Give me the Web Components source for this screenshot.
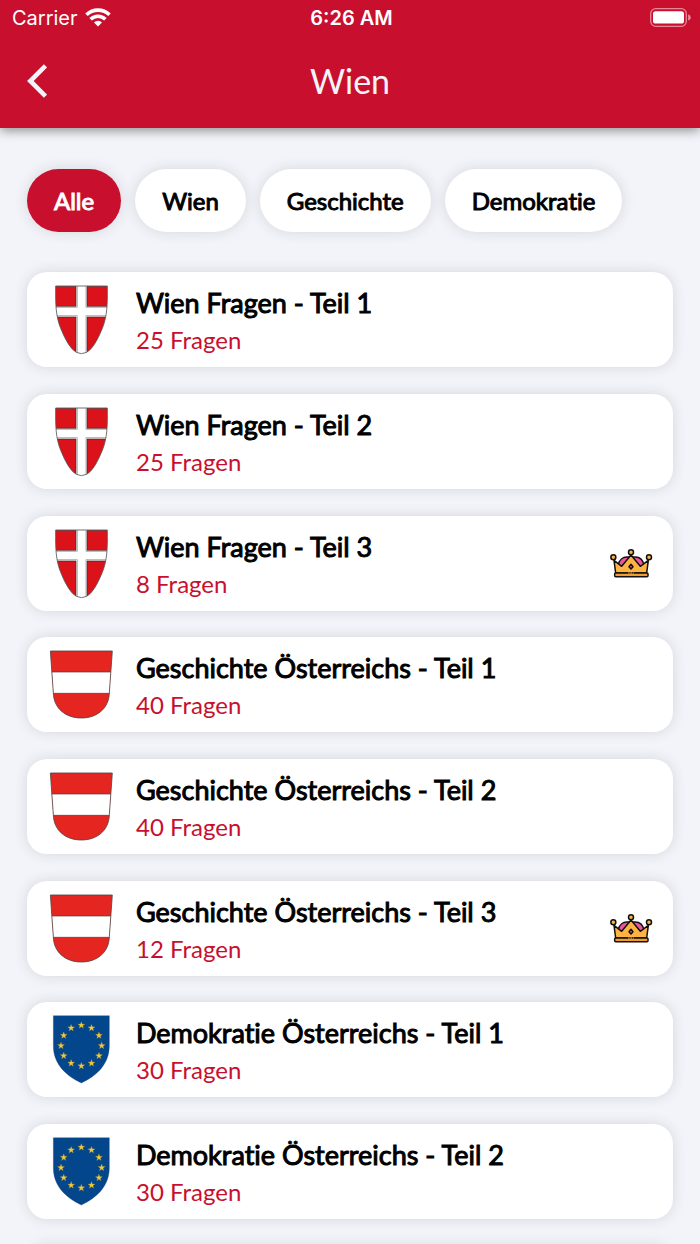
<!DOCTYPE html>
<html lang="de">
<head>
<meta charset="utf-8">
<meta name="viewport" content="width=device-width, initial-scale=1">
<title>Wien</title>
<style>
  body {
    margin: 0;
    font-family: Lato, sans-serif;
    font-variant-ligatures: none;
    color: #000;
    background: #f3f4f9;
    --red: #c8102e;
    --shadow: 0 0 14px rgba(40, 45, 60, 0.14);
  }
</style>
</head>
<body>
<quiz-app></quiz-app>

<script>
const define = (name, html, setup) => {
  const template = document.createElement('template');
  template.innerHTML = html;

  customElements.define(name, class extends HTMLElement {
    constructor() {
      super();
      this.attachShadow({ mode: 'open' }).appendChild(template.content.cloneNode(true));
    }

    connectedCallback() {
      if (setup) setup(this, this.shadowRoot);
    }
  });
};

define('status-bar', `
  <style>
  :host {
    display: grid;
    grid-template-columns: 1fr auto 1fr;
    align-items: center;
    height: 36px;
    padding: 0 9px 0 12px;
    font: 20px/24px Inter, sans-serif;
    color: #fff;
  }

  .network {
    display: flex;
    align-items: center;
    gap: 7px;
  }

  .time {
    font-weight: 600;
  }

  .battery {
    justify-self: end;
  }

  svg {
    display: block;
  }
  </style>

  <div class="network">
    <span>Carrier</span>
    <svg width="26" height="20" viewBox="0 0 26 20" fill="none" stroke="#fff" stroke-width="3.6" aria-hidden="true">
      <path d="M1.500 6.800a16.500 16.500 0 0 1 23 0M5.600 11.300a10.500 10.500 0 0 1 14.800 0" />
      <path d="M13 18.500l-4-4a5.600 5.600 0 0 1 8 0z" fill="#fff" stroke="none" />
    </svg>
  </div>
  <time class="time">6:26 AM</time>
  <svg class="battery" width="41" height="20" viewBox="0 0 41 20" aria-hidden="true">
    <rect x="0.7" y="0.700" width="35.6" height="17.6" rx="5" fill="none" stroke="#fff" stroke-opacity="0.5" stroke-width="1.3" />
    <rect x="3" y="3.200" width="31" height="12.4" rx="2.6" fill="#fff" />
    <path d="M38.2 6.2q2.5 1 2.5 3.2t-2.5 3.2z" fill="#fff" fill-opacity="0.55" />
  </svg>
`);

define('app-header', `
  <style>
  :host {
    display: block;
    position: relative;
    z-index: 1;
    background: var(--red);
    box-shadow: 0 3px 10px rgba(0, 0, 0, 0.4);
  }

  .toolbar {
    display: grid;
    grid-template-columns: 1fr auto 1fr;
    align-items: center;
    box-sizing: border-box;
    height: 92px;
    padding: 0 15px 2px;
  }

  button {
    width: 44px;
    height: 44px;
    padding: 0;
    border: 0;
    background: none;
    cursor: pointer;
  }

  svg {
    display: block;
    margin: auto;
  }

  h1 {
    margin: 0;
    font-size: 34px;
    line-height: 44px;
    font-weight: 400;
    color: #f3f4f9;
  }
  </style>

  <status-bar></status-bar>
  <div class="toolbar">
    <button type="button" aria-label="Zurück">
      <svg width="20" height="34" viewBox="0 0 20 34" fill="none" stroke="#f3f4f9" stroke-width="4.600" aria-hidden="true">
        <path d="M18.500 1.800L3.300 17l15.200 15.200" />
      </svg>
    </button>
    <h1><slot></slot></h1>
  </div>
`);

define('filter-chip', `
  <style>
  :host {
    display: block;
  }

  button {
    display: block;
    height: 63px;
    padding: 0 27px;
    border: 0;
    border-radius: 32px;
    background: #fff;
    box-shadow: var(--shadow);
    font: 400 24px/32px Lato, sans-serif;
    font-variant-ligatures: none;
    -webkit-text-stroke: 1px;
    color: #000;
    cursor: pointer;
  }

  button[aria-pressed='true'] {
    background: var(--red);
    color: #fff;
  }
  </style>

  <button type="button" aria-pressed="false"><slot></slot></button>
`, (host, root) => {
  root.querySelector('button').setAttribute('aria-pressed', host.hasAttribute('selected'));
});

const star = (cx, cy) => {
  const points = [];
  for (let i = 0; i < 10; i++) {
    const r = i % 2 ? 4.6 : 11;
    const a = Math.PI * (i / 5 - 0.5);
    points.push(`${(cx + r * Math.cos(a)).toFixed(1)},${(cy + r * Math.sin(a)).toFixed(1)}`);
  }
  return `<polygon points="${points.join(' ')}" />`;
};

const stars = Array.from({ length: 12 }, (_, i) => {
  const a = (Math.PI * i) / 6;
  return star(109 + 61 * Math.sin(a), 122 - 61 * Math.cos(a));
}).join('');

const shields = {
  wien: `
    <clipPath id="outline"><path d="M32 33H187C188 90 186 125 172 160Q148 220 125 232Q109 240 94 232Q71 220 47 160C33 125 31 90 32 33Z" /></clipPath>
    <g clip-path="url(#outline)">
      <path fill="#fff" d="M20 20h180v230H20z" />
      <g fill="#db1219" stroke="#4b2022" stroke-width="2">
        <path d="M20 34h73v60H20zM126 34h80v60h-80zM20 126h73v120H20zM126 126h80v120h-80z" />
      </g>
      <path fill="none" stroke="#8b8b8b" stroke-width="2" d="M97 30v67H20M123 30v67h80M97 240V122H20M123 240V122h80" />
    </g>
    <path fill="none" stroke="#555" stroke-width="2.500" d="M32 33H187C188 90 186 125 172 160Q148 220 125 232Q109 240 94 232Q71 220 47 160C33 125 31 90 32 33Z" />`,
  austria: `
    <clipPath id="outline"><path d="M16 33H202L193 158C192 207 154 234 109 234S26 207 25 158Z" /></clipPath>
    <g clip-path="url(#outline)">
      <path fill="#e52620" d="M10 30h200v210H10z" />
      <path fill="#fff" stroke="#6b2a28" stroke-width="2" d="M10 96h200v64H10z" />
    </g>
    <path fill="none" stroke="#554442" stroke-width="2.500" d="M16 33H202L193 158C192 207 154 234 109 234S26 207 25 158Z" />`,
  eu: `
    <path fill="#03468b" stroke="#254f7b" d="M25 32H193V122C193 176 158 210 109 234C60 210 25 176 25 122Z" />
    <g fill="#f1ca3c" stroke="#8c8440" stroke-width="1">${stars}</g>`,
};

define('quiz-card', `
  <style>
  :host {
    display: block;
  }

  a {
    display: grid;
    grid-template-columns: 70px 1fr auto;
    column-gap: 20px;
    align-items: center;
    box-sizing: border-box;
    min-height: 95px;
    padding: 0 20px 0 19px;
    border-radius: 20px;
    background: #fff;
    box-shadow: var(--shadow);
    text-decoration: none;
    color: inherit;
  }

  svg {
    display: block;
  }

  .text {
    padding-top: 3px;
  }

  h2 {
    margin: 0;
    font-size: 27px;
    line-height: 36px;
    font-weight: 400;
    -webkit-text-stroke: 1px;
  }

  p {
    margin: 0;
    font-size: 24px;
    line-height: 37px;
    color: var(--red);
  }

  .crown {
    display: none;
  }

  :host([premium]) .crown {
    display: block;
  }
  </style>

  <a href="#">
    <svg class="shield" width="70" height="70" viewBox="3 30 210 210" aria-hidden="true"></svg>
    <div class="text">
      <h2><slot></slot></h2>
      <p><slot name="count"></slot></p>
    </div>
    <svg class="crown" width="44" height="30" viewBox="28 116 132 90" stroke="#111" stroke-width="4.500" stroke-linejoin="round" aria-hidden="true">
      <path fill="#f0559b" d="M55 166C58 148 70 139 84 140H104C118 139 130 148 134 166Z" />
      <path fill="#fdb441" d="M43 150L66 168L94 134L122 168L146 150L141 188H48Z" />
      <path fill="#f0559b" d="M94 162l6 7l-6 7l-6-7z" />
      <rect fill="#f39c2d" x="45" y="188" width="100" height="11" rx="3" />
      <path fill="none" stroke="#fdb441" stroke-width="4" d="M86 188h16" />
      <path fill="none" stroke-width="3" d="M91 185v5M98 185v5" />
      <g fill="#fdb441">
        <circle cx="94" cy="126" r="7.500" />
        <circle cx="41" cy="141" r="7.500" />
        <circle cx="148" cy="141" r="7.500" />
      </g>
    </svg>
  </a>
`, (host, root) => {
  root.querySelector('.shield').innerHTML = shields[host.getAttribute('shield')];
});

define('quiz-placeholder', `
  <style>
  :host {
    display: block;
    height: 95px;
    border-radius: 20px;
    background: #fff;
    box-shadow: var(--shadow);
  }
  </style>
`);

define('quiz-group', `
  <style>
  :host {
    display: grid;
    gap: 27px;
  }
  </style>

  <slot></slot>
`);

define('quiz-app', `
  <style>
  :host {
    display: flex;
    flex-direction: column;
    height: 100vh;
  }

  main {
    flex: 1;
    min-height: 0;
    overflow-y: auto;
    scrollbar-width: none;
    padding: 41px 27px;
  }

  nav {
    display: flex;
    flex-wrap: wrap;
    gap: 14px;
    margin-bottom: 40px;
  }

  .groups {
    display: grid;
    gap: 26px;
  }
  </style>

  <app-header>Wien</app-header>
  <main>
    <nav aria-label="Kategorien">
      <filter-chip selected>Alle</filter-chip>
      <filter-chip>Wien</filter-chip>
      <filter-chip>Geschichte</filter-chip>
      <filter-chip>Demokratie</filter-chip>
    </nav>
    <div class="groups">
      <quiz-group>
        <quiz-card shield="wien">Wien Fragen - Teil 1<span slot="count">25 Fragen</span></quiz-card>
        <quiz-card shield="wien">Wien Fragen - Teil 2<span slot="count">25 Fragen</span></quiz-card>
        <quiz-card shield="wien" premium>Wien Fragen - Teil 3<span slot="count">8 Fragen</span></quiz-card>
      </quiz-group>
      <quiz-group>
        <quiz-card shield="austria">Geschichte Österreichs - Teil 1<span slot="count">40 Fragen</span></quiz-card>
        <quiz-card shield="austria">Geschichte Österreichs - Teil 2<span slot="count">40 Fragen</span></quiz-card>
        <quiz-card shield="austria" premium>Geschichte Österreichs - Teil 3<span slot="count">12 Fragen</span></quiz-card>
      </quiz-group>
      <quiz-group>
        <quiz-card shield="eu">Demokratie Österreichs - Teil 1<span slot="count">30 Fragen</span></quiz-card>
        <quiz-card shield="eu">Demokratie Österreichs - Teil 2<span slot="count">30 Fragen</span></quiz-card>
        <quiz-placeholder></quiz-placeholder>
      </quiz-group>
    </div>
  </main>
`);
</script>
</body>
</html>
